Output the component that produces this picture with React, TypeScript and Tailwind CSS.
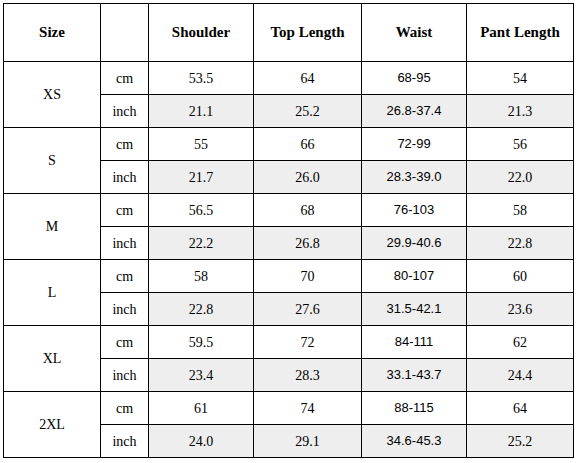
const rows = [
  { size: "XS", cm: ["53.5", "64", "68-95", "54"], inch: ["21.1", "25.2", "26.8-37.4", "21.3"] },
  { size: "S", cm: ["55", "66", "72-99", "56"], inch: ["21.7", "26.0", "28.3-39.0", "22.0"] },
  { size: "M", cm: ["56.5", "68", "76-103", "58"], inch: ["22.2", "26.8", "29.9-40.6", "22.8"] },
  { size: "L", cm: ["58", "70", "80-107", "60"], inch: ["22.8", "27.6", "31.5-42.1", "23.6"] },
  { size: "XL", cm: ["59.5", "72", "84-111", "62"], inch: ["23.4", "28.3", "33.1-43.7", "24.4"] },
  { size: "2XL", cm: ["61", "74", "88-115", "64"], inch: ["24.0", "29.1", "34.6-45.3", "25.2"] },
];

const headers = ["Shoulder", "Top Length", "Waist", "Pant Length"];

function Cells({ values, shaded }: { values: string[]; shaded?: boolean }) {
  return (
    <>
      {values.map((v, i) => (
        <td
          key={i}
          className={`border border-black text-center ${shaded ? "bg-[#eeeeee]" : ""} ${
            i === 2 ? "font-['Liberation_Sans',Arial,sans-serif] text-[13px]" : ""
          }`}
        >
          {v}
        </td>
      ))}
    </>
  );
}

export default function App() {
  return (
    <div className="min-h-[463px] bg-white p-[3px] text-[14px] text-black font-['Liberation_Serif','Times_New_Roman',serif]">
      <table className="w-[570px] table-fixed border-collapse">
        <colgroup>
          <col className="w-[97px]" />
          <col className="w-[48px]" />
          <col className="w-[105px]" />
          <col className="w-[108px]" />
          <col className="w-[105px]" />
          <col className="w-[107px]" />
        </colgroup>
        <thead>
          <tr className="h-[58px] text-[15px]">
            <th className="border border-black font-bold">Size</th>
            <th className="border border-black"></th>
            {headers.map((h) => (
              <th key={h} className="border border-black font-bold">
                {h}
              </th>
            ))}
          </tr>
        </thead>
        <tbody>
          {rows.map((r) => (
            <>
              <tr key={r.size + "-cm"} className="h-[33px]">
                <td rowSpan={2} className="border border-black text-center">
                  {r.size}
                </td>
                <td className="border border-black text-center">cm</td>
                <Cells values={r.cm} />
              </tr>
              <tr key={r.size + "-inch"} className="h-[33px]">
                <td className="border border-black text-center">inch</td>
                <Cells values={r.inch} shaded />
              </tr>
            </>
          ))}
        </tbody>
      </table>
    </div>
  );
}
